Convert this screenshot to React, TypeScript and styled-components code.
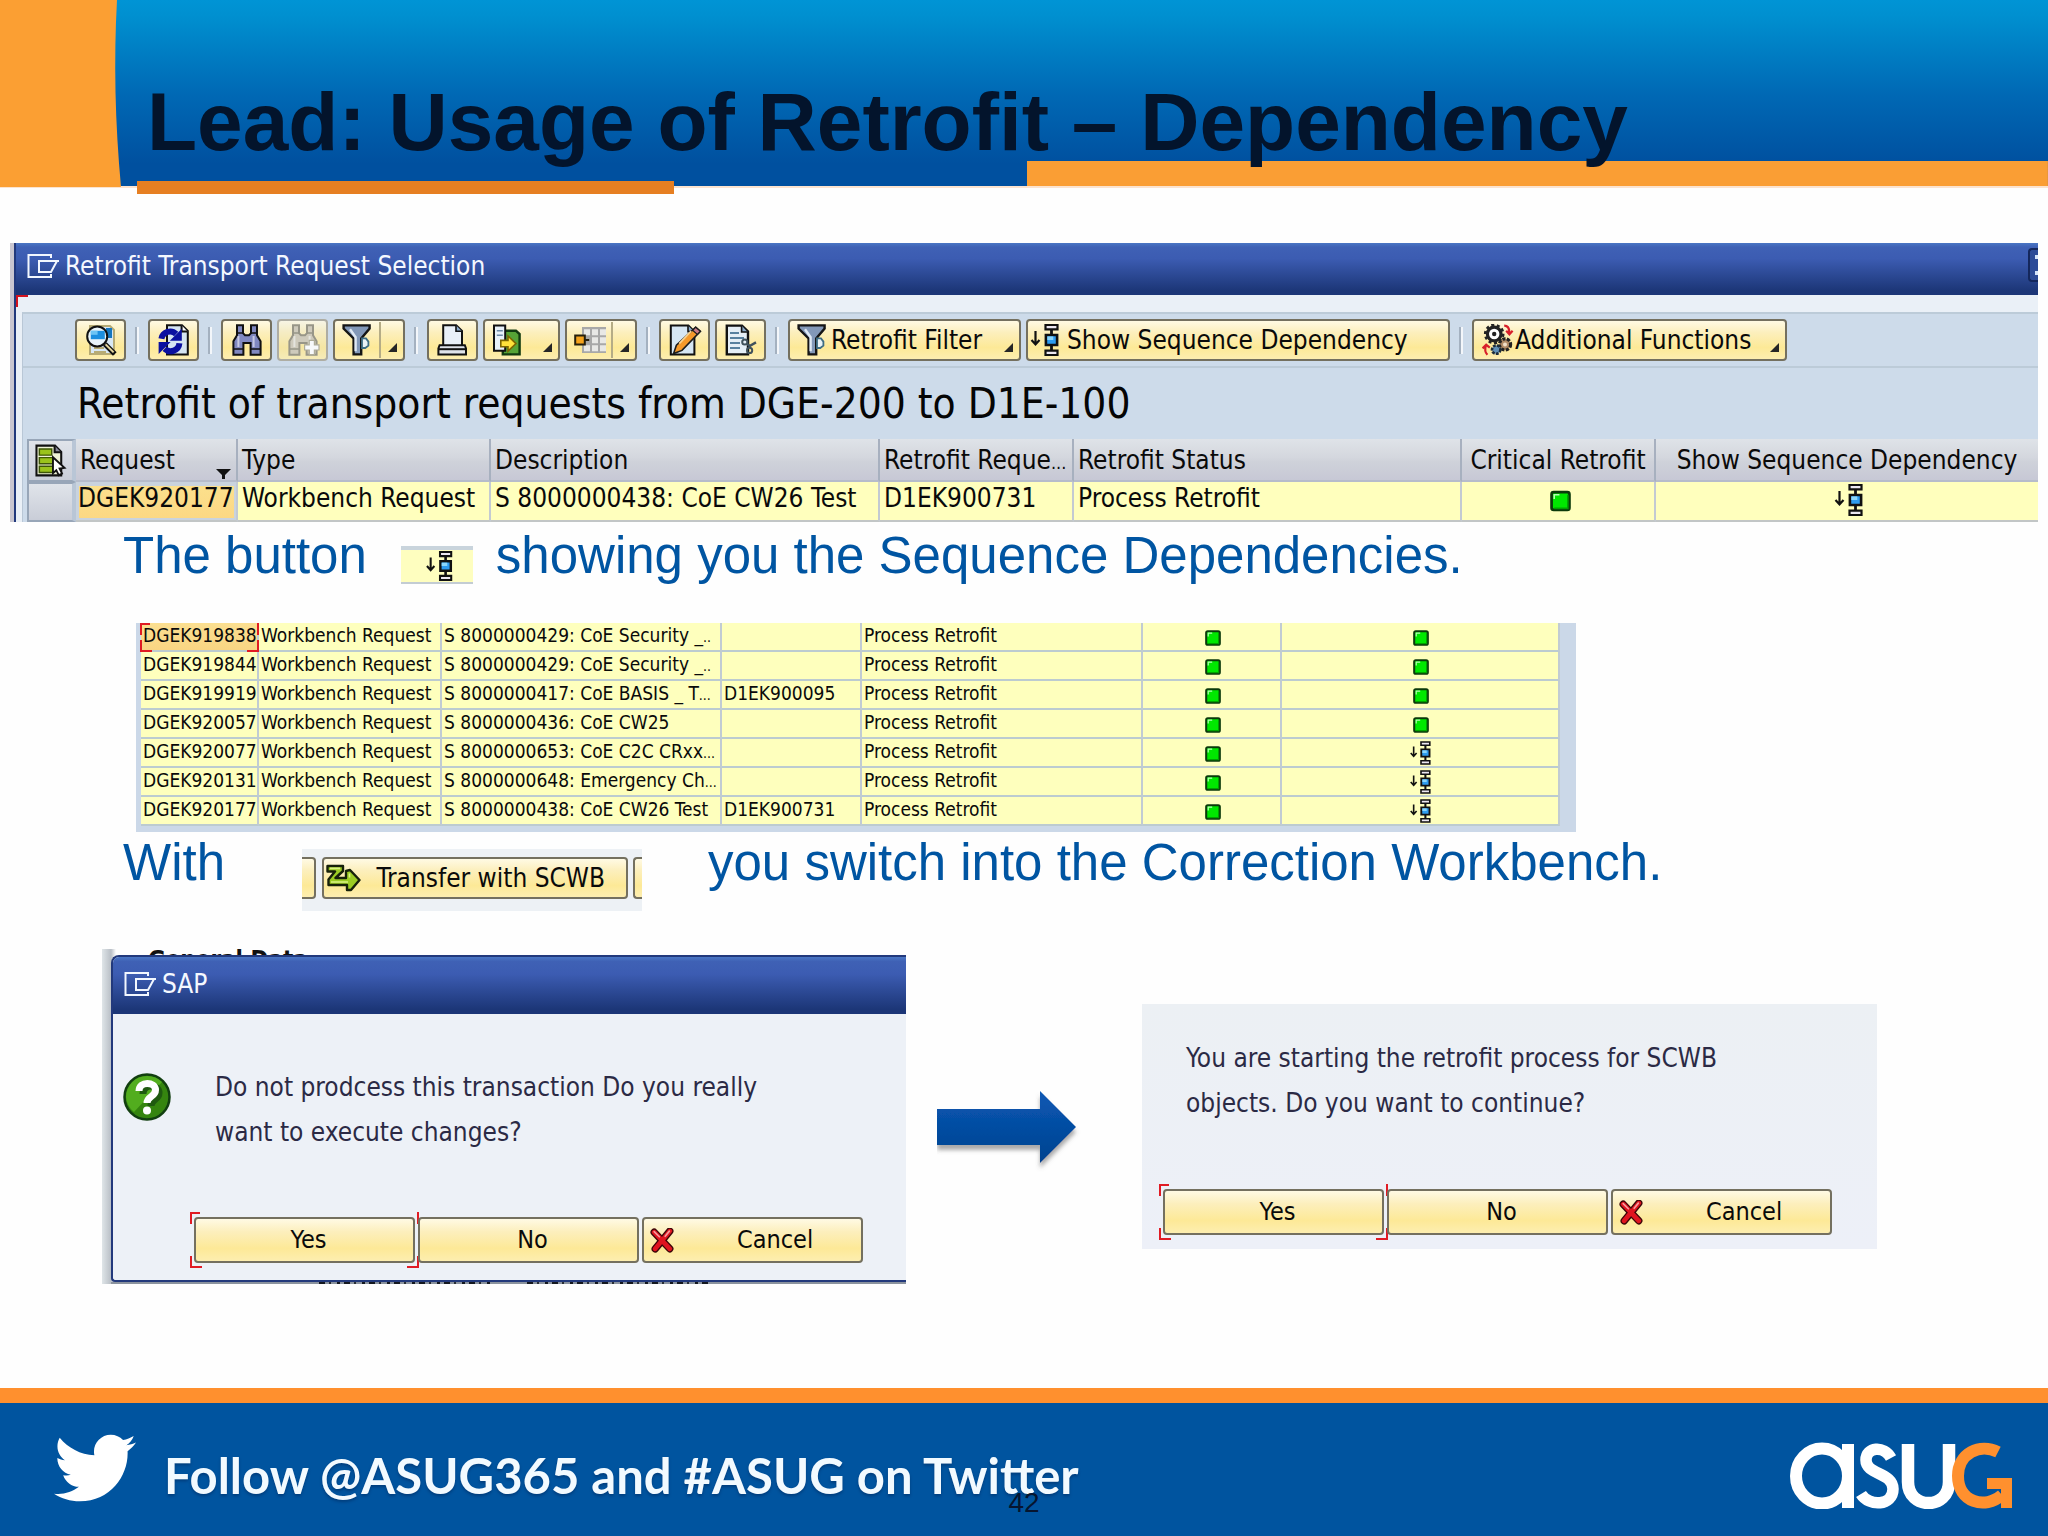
import React from "react";
import styled, { createGlobalStyle, css } from "styled-components";
import { FaTwitter } from "react-icons/fa";

const sapFont = `"DejaVu Sans Condensed", "DejaVu Sans", sans-serif`;
const slideFont = `"Liberation Sans", Arial, sans-serif`;

const GlobalStyle = createGlobalStyle`
  *, *::before, *::after { box-sizing: border-box; }
  body { margin: 0; background: #fefefe; font-family: ${slideFont}; }
  button { font: inherit; color: inherit; cursor: pointer; }
`;

/* Red bracket marks drawn at the four corners of a focused element. */
const brackets = css`
  content: "";
  position: absolute;
  pointer-events: none;
  --c: linear-gradient(#e01b24, #e01b24);
  background:
    var(--c) 0 0 / 10px 2px, var(--c) 0 0 / 2px 12px,
    var(--c) 100% 0 / 2px 12px,
    var(--c) 0 100% / 12px 2px, var(--c) 0 100% / 2px 12px,
    var(--c) 100% 100% / 12px 2px, var(--c) 100% 100% / 2px 12px;
  background-repeat: no-repeat;
`;

/* ---------- slide frame ---------- */

const Slide = styled.div`
  min-height: 100vh;
  display: flex;
  flex-direction: column;
`;

const Header = styled.header`
  position: relative;
  display: flex;
  height: 186px;
  background:
    linear-gradient(#fa9e34, #fa9e34) 100% 100% / 49.85% 25px no-repeat,
    linear-gradient(#0094d5 0%, #0090d0 8%, #0069b5 50%, #00509f 88%, #00509f 100%);
  box-shadow: 0 2px 0 #fbe3cf;
`;

const HeaderBlock = styled.svg`
  flex: none;
  width: 122px;
  height: 187px;
`;

const Title = styled.h1`
  position: relative;
  margin: 0;
  padding: 76px 0 0 25px;
  font-size: 82px;
  line-height: 92px;
  font-weight: 700;
  color: #03142c;
  white-space: nowrap;

  &::after {
    content: "";
    position: absolute;
    left: 15px;
    top: 181px;
    width: 537px;
    height: 13px;
    background: #e67f22;
  }
`;

const Main = styled.main`
  flex: 1;
  padding-top: 57px;
`;

const Sentence = styled.div`
  display: flex;
  align-items: flex-start;
  padding: 4px 0 0 123px;
  font-size: 51px;
  line-height: 60px;
  color: #0055a2;
  white-space: nowrap;
`;

const SentenceOne = styled(Sentence)`
  height: 101px;
`;

const SentenceTwo = styled(Sentence)`
  padding-top: 1px;
  height: 117px;
`;

/* ---------- SAP window ---------- */

const Window = styled.section`
  margin: 0 10px;
  border-left: 4px solid #c9c6d0;
  font-family: ${sapFont};
  font-size: 26px;
  color: #0a0a0a;
`;

const WindowInner = styled.div`
  border-left: 2px solid #22397c;
  background: #eaf0f7;
`;

const TitleBar = styled.div`
  display: flex;
  align-items: flex-start;
  gap: 6px;
  height: 52px;
  padding: 0 0 0 11px;
  line-height: 47px;
  color: #f4f8ff;
  white-space: nowrap;
  background: linear-gradient(#4a76c4 0, #3f61b5 8%, #3c5cb2 30%, #1c3677 92%, #1c3677 100%);
`;

const TitleIcon = styled.svg`
  width: 32px;
  height: 24px;
  margin-top: 11px;
`;

const WindowTitle = styled.h2`
  margin: 0;
  font-size: 26px;
  font-weight: 400;
`;

const CloseStub = styled.button`
  width: 10px;
  height: 34px;
  margin: 5px 0 0 auto;
  padding: 5px 0;
  border: 2px solid #14275c;
  border-right: 0;
  border-radius: 4px 0 0 4px;
  background: #2c4b98;
  display: flex;
  flex-direction: column;
  justify-content: space-between;
  align-items: flex-end;

  &::before, &::after { content: ""; width: 3px; height: 4px; background: #d5e4fb; }
`;

const Strip = styled.div`
  position: relative;
  height: 17px;

  &::before {
    content: "";
    position: absolute;
    left: 0;
    top: 0;
    width: 12px;
    height: 12px;
    border-left: 2px solid #d4131f;
    border-top: 2px solid #d4131f;
  }
`;

const Pane = styled.div`
  margin-left: 6px;
  background: #cddbea;
  border-left: 1px solid #b9c7d6;
  border-top: 2px solid #bccbd8;
`;

const Toolbar = styled.div`
  display: flex;
  align-items: center;
  gap: 5px;
  height: 54px;
  padding: 0 0 0 52px;
  border-bottom: 2px solid #bccbd8;
`;

const Separator = styled.span`
  width: 4px;
  height: 27px;
  margin: 0 4px;
  border-left: 2px solid #a4b1c0;
  border-right: 2px solid #f3f6fa;
`;

const goldSurface = css`
  border: 2px solid #74705f;
  border-radius: 4px;
  background: linear-gradient(#fffae4 0%, #fcefbd 30%, #fde997 70%, #fdeeb0 100%);
`;

const ToolButton = styled.button<{ $w?: number; $off?: boolean }>`
  ${goldSurface}
  position: relative;
  flex: none;
  display: flex;
  align-items: center;
  width: ${(p) => p.$w ?? 51}px;
  height: 42px;
  padding: 0 7px;
  line-height: 38px;
  white-space: nowrap;
  ${(p) => p.$off && css`border-color: #a9a697; opacity: 0.85;`}

  svg { flex: none; }
`;

const SequenceButton = styled(ToolButton)`
  padding: 0 2px;
  gap: 6px;
`;

const Split = styled.span`
  width: 2px;
  height: 36px;
  margin-left: 3px;
  background: #b5ac86;
`;

const MenuMark = styled.span`
  position: absolute;
  right: 6px;
  bottom: 7px;
  width: 0;
  height: 0;
  border-left: 9px solid transparent;
  border-bottom: 9px solid #262626;
`;

const PaneHeading = styled.h3`
  margin: 0;
  padding: 2px 0 2px 54px;
  font-size: 42px;
  line-height: 67px;
  font-weight: 400;
  color: #050505;
  white-space: nowrap;
`;

const Grid = styled.table`
  width: calc(100% - 4px);
  margin-left: 4px;
  table-layout: fixed;
  border-collapse: separate;
  border-spacing: 0;
  white-space: nowrap;
`;

const Col = styled.col<{ $w?: number }>`
  ${(p) => p.$w && `width: ${p.$w}px;`}
`;

const HeadCell = styled.th<{ $center?: boolean }>`
  position: relative;
  height: 40px;
  padding: ${(p) => (p.$center ? "4px 0 0" : "4px 0 0 4px")};
  overflow: hidden;
  vertical-align: top;
  font-weight: 400;
  line-height: 34px;
  text-align: ${(p) => (p.$center ? "center" : "left")};
  background: linear-gradient(#dfe3e8, #d4d7de 45%, #cfd2da 55%, #c7c8d5);
  border-right: 2px solid #a7b0bf;
  border-bottom: 2px solid #b6bccb;
  &:last-child { border-right: 0; }
`;

const MarkerCell = styled.th`
  height: 40px;
  padding: 0;
  background: linear-gradient(#e0e4ea, #c9cdd8);
  border: 2px solid #98a6b8;
  border-right: 4px solid #b9c6d6;
  vertical-align: middle;
  text-align: center;
  svg { display: block; margin: 0 auto; }
`;

const Cell = styled.td<{ $picked?: boolean }>`
  height: 40px;
  padding: 0 0 0 ${(p) => (p.$picked ? 2 : 4)}px;
  vertical-align: top;
  line-height: 33px;
  background: #ffffbd;
  border-right: 2px solid #c3cad2;
  border-bottom: 2px solid #c2c6c6;
  &:last-child { border-right: 0; }
  svg { display: block; margin: 2px auto 0; }
  ${(p) => p.$picked && css`
    background: linear-gradient(#fce08c, #fbd884) 3px 4px / calc(100% - 5px) 32px no-repeat, #c9d3de;
  `}
`;

const SortMark = styled.span`
  position: absolute;
  right: 5px;
  bottom: 1px;
  svg { display: block; }
`;

const Dots = styled.span<{ $size: number }>`
  font-size: ${(p) => p.$size}px;
`;

/* ---------- request list ---------- */

const List = styled.section`
  width: 1440px;
  margin-left: 136px;
  padding: 0 16px 6px 5px;
  background: #cbd8e8;
  font-family: ${sapFont};
  font-size: 19px;
  color: #0a0a0a;
`;

const ListTable = styled(Grid)`
  width: 100%;
  margin: 0;
`;

const ListCell = styled.td<{ $picked?: boolean }>`
  position: relative;
  height: 29px;
  padding: 0 0 0 2px;
  vertical-align: top;
  line-height: 24px;
  background: ${(p) => (p.$picked ? "linear-gradient(#fbdf90, #f9d583)" : "#feffbd")};
  border-right: 2px solid #c1cbd3;
  border-bottom: 2px solid #bccbd0;
  svg { display: block; margin: 2px auto 0; }
  ${(p) => p.$picked && css`&::after { ${brackets} inset: 0 -2px -2px -1px; }`}
`;

/* ---------- inline snippets ---------- */

const IconSnippet = styled.button`
  display: flex;
  align-items: center;
  justify-content: center;
  width: 72px;
  height: 38px;
  margin: 20px 23px 0 34px;
  padding: 0 0 0 6px;
  border: 0;
  border-top: 4px solid #c9d4dc;
  border-bottom: 2px solid #c3ccd3;
  background: #fefebf;
`;

const ButtonSnippet = styled.span`
  display: flex;
  align-items: center;
  justify-content: space-between;
  width: 340px;
  height: 62px;
  margin: 16px 66px 0 77px;
  padding-bottom: 4px;
  background: #edf1f5;
  font-family: ${sapFont};
  font-size: 26px;
  color: #0a0a0a;
`;

const Stub = styled.span<{ $side: "left" | "right" }>`
  ${goldSurface}
  height: 42px;
  ${(p) => p.$side === "left"
    ? css`width: 14px; border-left: 0; border-radius: 0 4px 4px 0;`
    : css`width: 9px; border-right: 0; border-radius: 4px 0 0 4px;`}
`;

const TransferButton = styled(ToolButton)`
  width: 306px;
  padding: 0 4px 0 2px;
  gap: 16px;
`;

/* ---------- dialogs ---------- */

const DialogRow = styled.div`
  display: flex;
  align-items: flex-start;
  padding-left: 102px;
  padding-bottom: 104px;
`;

const Capture = styled.div`
  width: 804px;
  padding-left: 9px;
  background: linear-gradient(90deg, #dfe5e8 0, #b9bfc6 9px, #fefefe 14px);
  font-family: ${sapFont};
`;

const CutTop = styled.div`
  height: 6px;
  padding-left: 37px;
  overflow: hidden;
  font-size: 24px;
  line-height: 22px;
  font-weight: 700;
  color: #111;
`;

/* Sliver of the window that lies behind the dialog. */
const CutBottom = styled.div`
  display: flex;
  gap: 34px;
  height: 2px;
  padding-left: 208px;
  background: #8b939e;
`;

const Sliver = styled.span<{ $w: number }>`
  width: ${(p) => p.$w}px;
  background: repeating-linear-gradient(90deg, #15181f 0 6px, #8b939e 6px 10px, #2a2e36 10px 12px, #8b939e 12px 18px, #15181f 18px 21px, #8b939e 21px 25px);
`;

const Dialog = styled.section`
  border: 2px solid #22397c;
  border-right: 0;
  border-radius: 8px 0 0 4px;
  overflow: hidden;
  background: #edf1f7;
`;

const DialogBar = styled(TitleBar)`
  height: 57px;
  line-height: 54px;
`;

const DialogIcon = styled(TitleIcon)`
  margin-top: 15px;
`;

const DialogBody = styled.div`
  display: flex;
  align-items: flex-start;
  padding: 51px 0 0 10px;
  height: 203px;

  svg { margin-top: 8px; flex: none; }
`;

const Message = styled.p`
  margin: 0 0 0 44px;
  font-size: 26px;
  line-height: 45px;
  color: #2b2a45;
`;

const Choices = styled.div`
  display: flex;
  gap: 3px;
  height: 63px;
  padding-left: 81px;
`;

const Choice = styled.button<{ $focus?: boolean }>`
  ${goldSurface}
  position: relative;
  width: 221px;
  height: 46px;
  padding: 0 0 0 8px;
  font-size: 25px;
  line-height: 42px;
  color: #0a0a0a;
  ${(p) => p.$focus && css`&::after { ${brackets} inset: -7px -6px; }`}
`;

const CancelChoice = styled(Choice)`
  display: flex;
  align-items: center;
  gap: 62px;
  padding-left: 6px;
`;

const Arrow = styled.svg`
  flex: none;
  width: 147px;
  height: 88px;
  margin: 140px 58px 0 31px;
`;

const Prompt = styled.section`
  width: 735px;
  height: 245px;
  margin-top: 55px;
  padding-top: 32px;
  background: linear-gradient(#ecf0f4, #edf0f8);
  font-family: ${sapFont};
`;

const PromptChoices = styled(Choices)`
  height: auto;
  padding: 63px 0 0 21px;
`;

/* ---------- footer ---------- */

const Footer = styled.footer`
  position: relative;
  display: flex;
  align-items: flex-start;
  height: 149px;
  padding: 24px 36px 0 54px;
  border-top: 15px solid #ff902e;
  background: #00549f;
`;

const Bird = styled(FaTwitter)`
  flex: none;
  width: 82px;
  height: 82px;
  color: #fff;
`;

const Follow = styled.p`
  margin: 20px 0 0 28px;
  font-family: Lato, "Open Sans", sans-serif;
  font-size: 49px;
  line-height: 56px;
  font-weight: 700;
  color: #f2faff;
  text-shadow: 0 2px 3px rgba(0, 20, 60, 0.35);
  white-space: nowrap;
`;

const PageNumber = styled.span`
  position: absolute;
  left: 0;
  right: 0;
  top: 84px;
  text-align: center;
  font-size: 28px;
  line-height: 32px;
  color: #06152f;
`;

const Logo = styled.svg`
  flex: none;
  width: 222px;
  height: 67px;
  margin: 15px 0 0 auto;
`;

/* ---------- icons ---------- */

const Px = ({ children }: { children: React.ReactNode }) => (
  <svg width={34} height={32} viewBox="0 0 17 16" aria-hidden="true">{children}</svg>
);

const DetailIcon = () => (
  <Px>
    <path d="M3 1h10l2 2v12H3z" fill="#d9e8f4" stroke="#b7ab74" strokeWidth="1" />
    <path d="M11 2h3v5h-3z" fill="#1576c0" />
    <path d="M5 12h5M5 14h6" stroke="#b7ab74" />
    <circle cx="6.6" cy="6.2" r="5" fill="#e9f4fb" stroke="#111" strokeWidth="1" />
    <path d="M3.4 3.4h7v4.2h-7z" fill="#1c8fe0" />
    <path d="M3.4 3.4h3.4v2H3.4z" fill="#6cc4f5" />
    <path d="M10.4 10l5 5" stroke="#111" strokeWidth="2.6" />
    <path d="M10.8 10.2l4 4" stroke="#e8d9a0" strokeWidth="1" />
  </Px>
);

const RefreshIcon = () => (
  <Px>
    <path d="M5 .6h7.5L15.4 3.5V15.2H5z" fill="#d5e5f2" stroke="#111" />
    <path d="M12.3.6v3.2h3" fill="#fff" stroke="#111" />
    <path d="M2.2 7.4A4.4 4.4 0 0 1 9.6 5" fill="none" stroke="#0a10a0" strokeWidth="3" />
    <path d="M12.4 2.4v6H6.4z" fill="#0a10a0" />
    <path d="M11.2 9.6a4.4 4.4 0 0 1-7.4 2.8" fill="none" stroke="#0a10a0" strokeWidth="3" />
    <path d="M.8 15V9h6z" fill="#0a10a0" />
  </Px>
);

const Binoculars = ({ fill, line, plus }: { fill: string; line: string; plus?: boolean }) => (
  <Px>
    <path d="M3.5.6h3v4l1 1h2l1-1v-4h3v5l1.8 3v6.8h-5V9.5h-3.6v5.9h-5V8.6l1.8-3z" fill={fill} stroke={line} />
    <path d="M3.5 4.5h3M10.5 4.5h3M2 12.5h4.5M10.5 12.5h4.5" stroke={line} strokeWidth=".8" />
    <path d="M4.2 6v5.5M11.8 6v5.5" stroke="#fff" strokeOpacity=".55" />
    {plus && <path d="M11.6 8.2h2.6v2.2h2.3v2.6h-2.3v2.3h-2.6V13H9.3v-2.6h2.3z" fill="#fff" stroke="#a9a48c" strokeWidth=".6" />}
  </Px>
);

const FunnelIcon = () => (
  <Px>
    <path d="M.8.7h13v1.6L9.6 7.2v8H5.8v-8L.8 2.3z" fill="#8298b8" stroke="#151515" strokeWidth="1.2" />
    <path d="M4 2.6l2.8 4v7" fill="none" stroke="#dfe9f4" strokeWidth="1.2" />
    <path d="M10 7.2h2l1.2 1.6v2L11.6 12H10z" fill="#e9f2f6" stroke="#3e6d84" strokeWidth=".9" />
  </Px>
);

const PrintIcon = () => (
  <Px>
    <path d="M3.6.6h6.5L13 3.4V11H3.600z" fill="#e9f0f8" stroke="#111" />
    <path d="M10 .6v3h3" fill="#8aa9c8" stroke="#111" strokeWidth=".8" />
    <path d="M1.800 10.600h12.600l.6 1.600v3H1.200v-3z" fill="#dfe3ea" stroke="#111" />
    <path d="M1.400 12.600h13.400" stroke="#111" />
  </Px>
);

const ExportIcon = () => (
  <Px>
    <path d="M5.4 3.400h6.600l1.800 1.600v10.200H5.400z" fill="#56a436" stroke="#123b10" strokeWidth="1.200" />
    <path d="M1 .8h5.600v12.600H1z" fill="#e8f1f9" stroke="#111" />
    <path d="M2.400 3.400h3M2.400 5.600h3" stroke="#6d8aa8" strokeWidth=".8" />
    <path d="M4.400 8.200h3.600V6l4 3.800-4 3.800v-2.200h-3.600z" fill="#ffe23a" stroke="#7c6500" strokeWidth=".8" />
  </Px>
);

const GridIcon = () => (
  <Px>
    <path d="M4 1.5h12v13H4z" fill="#a8a8a8" />
    <path d="M5 2.6h3v3H5zM9 2.6h3v3H9zM13 2.6h3v3h-3zM9 6.6h3v3H9zM13 6.6h3v3h-3zM5 10.6h3v3H5zM9 10.6h3v3H9zM13 10.6h3v3h-3z" fill="#e8e8e6" />
    <path d="M.6 5.8h4.8v4.4H.6z" fill="#f5a31c" stroke="#26200c" />
    <path d="M5.6 8h2" stroke="#26200c" />
  </Px>
);

const EditIcon = () => (
  <Px>
    <path d="M1.4.8h8.8l3 3v11.4H1.4z" fill="#d6e6f3" stroke="#111" />
    <path d="M10 .8v3h3" fill="#8aa9c8" stroke="#111" strokeWidth=".8" />
    <path d="M13.8 1.6l2.4 2L7 13.2l-4.2 1.6 1.4-4.2z" fill="#f5992a" stroke="#1b1b1b" strokeWidth=".8" />
    <path d="M13.8 1.6l2.4 2-1.5 1.6-2.3-2z" fill="#c97a86" stroke="#1b1b1b" strokeWidth=".6" />
    <path d="M5.6 9.8l6-6.2" stroke="#fbd28c" strokeWidth=".9" />
  </Px>
);

const LayoutIcon = () => (
  <Px>
    <path d="M1.4.8H9l3 3v11.4H1.4z" fill="#e5eef6" stroke="#111" strokeWidth="1.2" />
    <path d="M8.8.8V4h3" fill="#8aa9c8" stroke="#111" strokeWidth=".8" />
    <path d="M3 4.5h4.5M3 7h7M3 9.5h5M3 12h5" stroke="#58809f" strokeWidth=".9" />
    <circle cx="10.4" cy="9" r="1.3" fill="none" stroke="#41525c" strokeWidth="1" />
    <circle cx="12.8" cy="13.2" r="1.3" fill="none" stroke="#41525c" strokeWidth="1" />
    <path d="M11.4 9.8l1.4 1.2L16 9.2M12.8 11v1" fill="none" stroke="#41525c" strokeWidth="1.2" />
  </Px>
);

const SequenceIcon = ({ w = 31, h = 32 }: { w?: number; h?: number }) => (
  <svg width={w} height={h} viewBox="0 0 15 16" role="img" aria-label="Sequence dependency">
    <path d="M2.5 3.5V10M.5 8l2 2.2 2-2.2" fill="none" stroke="#111" strokeWidth="1.1" />
    <path d="M10.5 3v3M10.5 10v3" stroke="#111" strokeWidth="1.4" />
    <path d="M7.5.5h6v2.2h-6zM7.500 13.300h6v2.200h-6z" fill="#ece8f2" stroke="#111" strokeWidth="1.100" />
    <path d="M7.700 5.500h5.600v5H7.700z" fill="#2e9cf0" stroke="#111" strokeWidth="1.300" />
    <path d="M8.400 6.200h3v1.800h-3z" fill="#8ad6fc" />
  </svg>
);

const GearsIcon = () => (
  <Px>
    <circle cx="6.6" cy="5" r="3.4" fill="#fff" stroke="#222" strokeWidth="1.6" />
    <circle cx="6.6" cy="5" r="4.5" fill="none" stroke="#222" strokeWidth="1.3" strokeDasharray="1.5 1.3" />
    <circle cx="6.6" cy="5" r="1.1" fill="#222" />
    <circle cx="12" cy="10.2" r="2.8" fill="#b08a66" stroke="#222" strokeWidth="1.6" strokeDasharray="1.6 .7" />
    <circle cx="12" cy="10.2" r="1" fill="#f1dfc8" />
    <circle cx="7.6" cy="12.8" r="2.1" fill="#5f8fb6" stroke="#1d2c3a" strokeWidth="1.3" strokeDasharray="1.4 .6" />
    <path d="M11.6.8c2 0 2.6 1.2 2.6 3.6M12.6 3.4l1.6 1.8 1.6-1.8M3.2 15.4c-1.4-1.4-1.4-2.6-.8-4.6M.8 12.2l1.8-1.8 1.8 1.4" fill="none" stroke="#d81f2a" strokeWidth="1.1" />
  </Px>
);

const SelectIcon = () => (
  <svg width="33" height="33" viewBox="0 0 16 16" aria-hidden="true">
    <path d="M1.2.8h9l3 3v11.4h-12z" fill="#eef2d6" stroke="#111" />
    <path d="M10 .8v3.2h3.2" fill="#889" stroke="#111" />
    <path d="M2.6 2.4h6v3h-6zM2.6 6.6h6.6v3H2.6zM2.6 10.8h6.6v3H2.6z" fill="#9ac31c" stroke="#3e5607" strokeWidth=".7" />
    <path d="M9.2 6.4l5.6 5.2-2.4.3 1.2 2.4-1.6.8-1.2-2.4-1.6 1.4z" fill="#fff" stroke="#111" strokeWidth=".9" />
  </svg>
);

const TransferIcon = () => (
  <svg width="35" height="28" viewBox="0 0 35 28" aria-hidden="true">
    <path d="M1.5 2H17v5l-7.500 7H20V7l4-1 9.500 10L25 26h-4v-5H2.500v-5.500L9 7.500H1.500z" fill="#9ccc24" stroke="#17210a" strokeWidth="2.400" strokeLinejoin="round" />
    <path d="M4 4.400h10M5 18h17M23.500 9.500v4" stroke="#d9f383" strokeWidth="1.600" />
  </svg>
);

const CrossIcon = () => (
  <svg width="25" height="25" viewBox="0 0 24 24" aria-hidden="true">
    <path d="M4 4l15 16M19 3L5 20" stroke="#3c0508" strokeWidth="7" strokeLinecap="round" />
    <path d="M4 4l15 16M19 3L5 20" stroke="#e0141f" strokeWidth="4.5" strokeLinecap="round" />
    <path d="M4 3.4l5 5M18.6 3l-4 5" stroke="#f79a9d" strokeWidth="1.6" strokeLinecap="round" />
  </svg>
);

const QuestionIcon = () => (
  <svg width="48" height="48" viewBox="0 0 48 48" role="img" aria-label="Question">
    <circle cx="24" cy="24" r="22.5" fill="#35850f" stroke="#123f10" strokeWidth="2.5" />
    <path d="M3 24A21 21 0 0 1 24 3a21 21 0 0 1 15 6L11 39A21 21 0 0 1 3 24z" fill="#52ad1e" />
    <path d="M17 19c0-11 16-10 16-1 0 7-8 6-8 13" fill="none" stroke="#1f5a10" strokeWidth="7" transform="translate(3 2)" />
    <path d="M16 18c0-10.5 16.5-9.500 16.500-1 0 7-8.500 6-8.500 13" fill="none" stroke="#fff" strokeWidth="7" />
    <circle cx="24" cy="37.5" r="4" fill="#fff" />
  </svg>
);

const ExitGlyph = () => (
  <>
    <path d="M24 4V1H1.5v22H24v-3" fill="none" stroke="#f2f7ff" strokeWidth="2" />
    <path d="M32 7H12v11h12l6-11" fill="none" stroke="#f2f7ff" strokeWidth="2" />
  </>
);

const AsugLogo = () => (
  <Logo viewBox="0 0 222 67" role="img" aria-label="asug">
    <g fill="none" stroke="#fff">
      <ellipse cx="32" cy="34" rx="26" ry="27.5" strokeWidth="12" />
      <path d="M58 2v64" strokeWidth="12" />
      <path d="M101 16C94 3 76 5 76 18c0 15 27 12 27 29 0 17-24 18-32 5" strokeWidth="11.5" />
      <path d="M118 2v38c0 28 41 28 41 0V2" strokeWidth="12.5" />
    </g>
    <path d="M208 10C190 1 168 11 168 34c0 26 27 34 44 19" fill="none" stroke="#ff902e" strokeWidth="12" />
    <path d="M197 36h25v30h-11V47h-14z" fill="#ff902e" />
  </Logo>
);

const GreenLight = ({ w, h }: { w: number; h: number }) => (
  <svg width={w} height={h} viewBox="0 0 20 20" role="img" aria-label="Green">
    <rect x="1.5" y="1.5" width="17" height="17" rx="2" fill="#00e800" stroke="#0b3a0b" strokeWidth="2.6" />
    <path d="M4 8V4h5" fill="none" stroke="#b6ffb6" strokeWidth="1.5" />
    <path d="M17 4v13H4" fill="none" stroke="#00a300" strokeWidth="1.5" />
  </svg>
);

/* ---------- data ---------- */

type Row = { id: string; text: string; dots?: string; target?: string; linked?: boolean };

const rows: Row[] = [
  { id: "DGEK919838", text: "S 8000000429: CoE Security _", dots: ".." },
  { id: "DGEK919844", text: "S 8000000429: CoE Security _", dots: ".." },
  { id: "DGEK919919", text: "S 8000000417: CoE BASIS _ T", dots: "...", target: "D1EK900095" },
  { id: "DGEK920057", text: "S 8000000436: CoE CW25" },
  { id: "DGEK920077", text: "S 8000000653: CoE C2C CRxx", dots: "...", linked: true },
  { id: "DGEK920131", text: "S 8000000648: Emergency Ch", dots: "...", linked: true },
  { id: "DGEK920177", text: "S 8000000438: CoE CW26 Test", target: "D1EK900731", linked: true },
];

const windowCols = [49, 162, 253, 389, 194, 388, 194];
const listCols = [118, 183, 280, 140, 281, 139];

export default function App() {
  return (
    <Slide>
      <GlobalStyle />
      <Header>
        <HeaderBlock viewBox="0 0 122 187" preserveAspectRatio="none" aria-hidden="true">
          <path d="M0 0H117Q112 90 121 187H0z" fill="#fb9f33" />
        </HeaderBlock>
        <Title>Lead: Usage of Retrofit – Dependency</Title>
      </Header>

      <Main>
        <Window>
          <WindowInner>
            <TitleBar>
              <TitleIcon viewBox="0 0 32 24" aria-hidden="true"><ExitGlyph /></TitleIcon>
              <WindowTitle>Retrofit Transport Request Selection</WindowTitle>
              <CloseStub aria-label="Close" />
            </TitleBar>
            <Strip />
            <Pane>
              <Toolbar>
                <ToolButton aria-label="Details"><DetailIcon /></ToolButton>
                <Separator />
                <ToolButton aria-label="Refresh"><RefreshIcon /></ToolButton>
                <Separator />
                <ToolButton aria-label="Find"><Binoculars fill="#8088c0" line="#111" /></ToolButton>
                <ToolButton aria-label="Find next" $off><Binoculars fill="#cfc8b4" line="#8f8a78" plus /></ToolButton>
                <ToolButton aria-label="Filter" $w={72}><FunnelIcon /><Split /><MenuMark /></ToolButton>
                <Separator />
                <ToolButton aria-label="Print"><PrintIcon /></ToolButton>
                <ToolButton aria-label="Export" $w={77}><ExportIcon /><MenuMark /></ToolButton>
                <ToolButton aria-label="Choose layout" $w={72}><GridIcon /><Split /><MenuMark /></ToolButton>
                <Separator />
                <ToolButton aria-label="Edit"><EditIcon /></ToolButton>
                <ToolButton aria-label="Settings"><LayoutIcon /></ToolButton>
                <Separator />
                <ToolButton $w={233}><FunnelIcon />Retrofit Filter<MenuMark /></ToolButton>
                <SequenceButton $w={424}><SequenceIcon />Show Sequence Dependency</SequenceButton>
                <Separator />
                <ToolButton $w={315}><GearsIcon />Additional Functions<MenuMark /></ToolButton>
              </Toolbar>
              <PaneHeading>Retrofit of transport requests from DGE-200 to D1E-100</PaneHeading>
              <Grid>
                <colgroup>
                  {windowCols.map((w, i) => <Col key={i} $w={w} />)}
                  <Col />
                </colgroup>
                <thead>
                  <tr>
                    <MarkerCell aria-label="Select all"><SelectIcon /></MarkerCell>
                    <HeadCell>
                      Request
                      <SortMark><svg width="15" height="11" viewBox="0 0 15 11"><path d="M0 1h15L9 7v4H6V7z" fill="#111" /></svg></SortMark>
                    </HeadCell>
                    <HeadCell>Type</HeadCell>
                    <HeadCell>Description</HeadCell>
                    <HeadCell>Retrofit Reque<Dots $size={18}>...</Dots></HeadCell>
                    <HeadCell>Retrofit Status</HeadCell>
                    <HeadCell $center>Critical Retrofit</HeadCell>
                    <HeadCell $center>Show Sequence Dependency</HeadCell>
                  </tr>
                </thead>
                <tbody>
                  <tr>
                    <MarkerCell aria-label="Row 1" />
                    <Cell $picked>DGEK920177</Cell>
                    <Cell>Workbench Request</Cell>
                    <Cell>S 8000000438: CoE CW26 Test</Cell>
                    <Cell>D1EK900731</Cell>
                    <Cell>Process Retrofit</Cell>
                    <Cell><svg width="21" height="33" viewBox="0 -6 21 33"><GreenLight w={21} h={22} /></svg></Cell>
                    <Cell><SequenceIcon /></Cell>
                  </tr>
                </tbody>
              </Grid>
            </Pane>
          </WindowInner>
        </Window>

        <SentenceOne>
          <span>The button</span>
          <IconSnippet aria-label="Sequence dependency"><SequenceIcon w={28} h={30} /></IconSnippet>
          <span>showing you the Sequence Dependencies.</span>
        </SentenceOne>

        <List>
          <ListTable>
            <colgroup>
              {listCols.map((w, i) => <Col key={i} $w={w} />)}
              <Col />
            </colgroup>
            <tbody>
              {rows.map((r, i) => (
                <tr key={r.id}>
                  <ListCell $picked={i === 0}>{r.id}</ListCell>
                  <ListCell>Workbench Request</ListCell>
                  <ListCell>{r.text}{r.dots && <Dots $size={14}>{r.dots}</Dots>}</ListCell>
                  <ListCell>{r.target}</ListCell>
                  <ListCell>Process Retrofit</ListCell>
                  <ListCell><svg width="16" height="22" viewBox="0 -5 16 22"><GreenLight w={16} h={16} /></svg></ListCell>
                  <ListCell>
                    {r.linked
                      ? <SequenceIcon w={22} h={24} />
                      : <svg width="16" height="22" viewBox="0 -5 16 22"><GreenLight w={16} h={16} /></svg>}
                  </ListCell>
                </tr>
              ))}
            </tbody>
          </ListTable>
        </List>

        <SentenceTwo>
          <span>With</span>
          <ButtonSnippet>
            <Stub $side="left" />
            <TransferButton><TransferIcon />Transfer with SCWB</TransferButton>
            <Stub $side="right" />
          </ButtonSnippet>
          <span>you switch into the Correction Workbench.</span>
        </SentenceTwo>

        <DialogRow>
          <Capture>
            <CutTop>General Data</CutTop>
            <Dialog>
              <DialogBar>
                <DialogIcon viewBox="0 0 32 24" aria-hidden="true"><ExitGlyph /></DialogIcon>
                <WindowTitle>SAP</WindowTitle>
              </DialogBar>
              <DialogBody>
                <QuestionIcon />
                <Message>Do not prodcess this transaction Do you really<br />want to execute changes?</Message>
              </DialogBody>
              <Choices>
                <Choice $focus>Yes</Choice>
                <Choice>No</Choice>
                <CancelChoice><CrossIcon />Cancel</CancelChoice>
              </Choices>
            </Dialog>
            <CutBottom><Sliver $w={174} /><Sliver $w={184} /></CutBottom>
          </Capture>

          <Arrow viewBox="0 0 147 88" aria-hidden="true">
            <defs>
              <linearGradient id="arrowFill" x1="0" y1="0" x2="0" y2="1">
                <stop offset="0" stopColor="#0a58b4" />
                <stop offset="1" stopColor="#00428f" />
              </linearGradient>
              <filter id="arrowShadow" x="-10%" y="-10%" width="120%" height="140%">
                <feDropShadow dx="0" dy="5" stdDeviation="2" floodColor="#555" floodOpacity=".5" />
              </filter>
            </defs>
            <path d="M0 20h103V2l36 36-36 36V56H0z" fill="url(#arrowFill)" filter="url(#arrowShadow)" />
          </Arrow>

          <Prompt>
            <Message>You are starting the retrofit process for SCWB<br />objects. Do you want to continue?</Message>
            <PromptChoices>
              <Choice $focus>Yes</Choice>
              <Choice>No</Choice>
              <CancelChoice><CrossIcon />Cancel</CancelChoice>
            </PromptChoices>
          </Prompt>
        </DialogRow>
      </Main>

      <Footer>
        <Bird aria-hidden="true" />
        <Follow>Follow @ASUG365 and #ASUG on Twitter</Follow>
        <PageNumber>42</PageNumber>
        <AsugLogo />
      </Footer>
    </Slide>
  );
}
